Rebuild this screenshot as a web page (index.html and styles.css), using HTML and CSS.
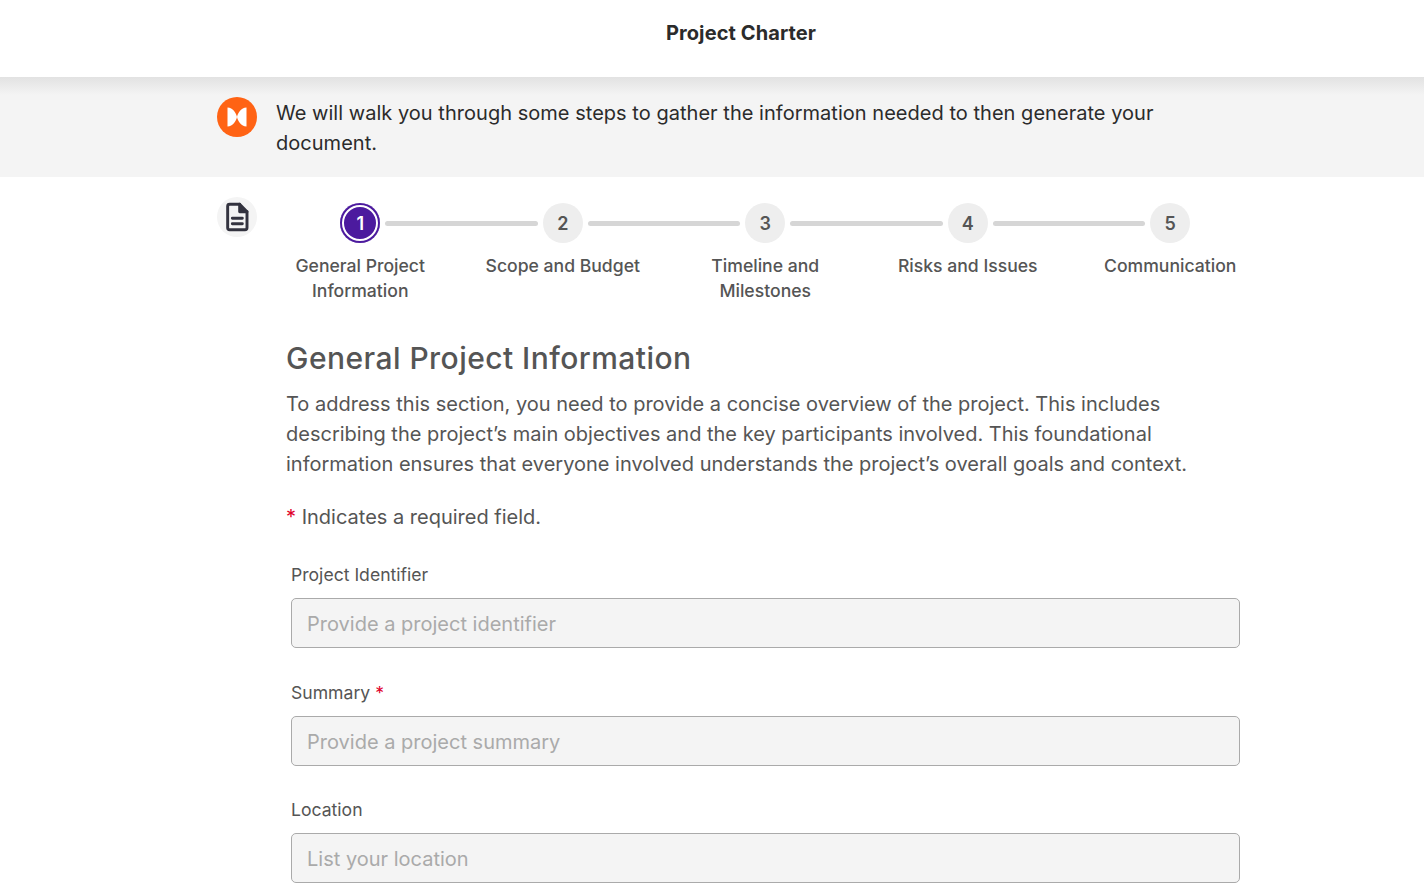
FILE: index.html
```html
<!DOCTYPE html>
<html lang="en">
<head>
<meta charset="utf-8">
<title>Project Charter</title>
<link rel="stylesheet" href="styles.css">
</head>
<body>
<header class="topbar"><h1 class="title">Project Charter</h1></header>
<section class="banner">
  <div class="banner-inner">
    <svg class="logo" viewBox="0 0 40 40" aria-hidden="true"><circle cx="20" cy="20" r="20" fill="#ff6314"/><path d="M10.500 10.500C16 11 19 15.500 20 20C19 24.500 16 29 10.500 29.500ZM29.500 10.500C24 11 21 15.500 20 20C21 24.500 24 29 29.500 29.500Z" fill="#fff"/></svg>
    <p class="banner-text">We will walk you through some steps to gather the information needed to then generate your document.</p>
  </div>
</section>
<main class="page">
  <div class="doc-badge">
    <svg viewBox="0 0 24 24" width="32" height="32" fill="none" stroke="#33333f" stroke-width="2.200" stroke-linejoin="round" stroke-linecap="round" aria-hidden="true"><path d="M6.500 2.500H14L19.500 8V20A1.500 1.500 0 0 1 18 21.500H6.500A1.500 1.500 0 0 1 5 20V4A1.500 1.500 0 0 1 6.500 2.500Z"/><path d="M14 2.500V8H19.500" fill="#33333f"/><path d="M8.500 13H16M8.500 17H16"/></svg>
  </div>
  <div class="content">
    <ol class="steps">
      <li class="step active"><div class="step-head"><span class="line none"></span><span class="num">1</span><span class="line right"></span></div><span class="step-label">General Project Information</span></li>
      <li class="step"><div class="step-head"><span class="line left"></span><span class="num">2</span><span class="line right"></span></div><span class="step-label">Scope and Budget</span></li>
      <li class="step"><div class="step-head"><span class="line left"></span><span class="num">3</span><span class="line right"></span></div><span class="step-label">Timeline and Milestones</span></li>
      <li class="step"><div class="step-head"><span class="line left"></span><span class="num">4</span><span class="line right"></span></div><span class="step-label">Risks and Issues</span></li>
      <li class="step"><div class="step-head"><span class="line left"></span><span class="num">5</span><span class="line none"></span></div><span class="step-label">Communication</span></li>
    </ol>
    <div class="body">
      <h2 class="heading">General Project Information</h2>
      <p class="intro">To address this section, you need to provide a concise overview of the project. This includes describing the project’s main objectives and the key participants involved. This foundational information ensures that everyone involved understands the project’s overall goals and context.</p>
      <p class="required"><span class="star">*</span> Indicates a required field.</p>
      <form class="form">
        <div class="field"><label class="label" for="f1">Project Identifier</label><input class="input" id="f1" placeholder="Provide a project identifier"></div>
        <div class="field"><label class="label" for="f2">Summary <span class="star">*</span></label><input class="input" id="f2" placeholder="Provide a project summary"></div>
        <div class="field"><label class="label" for="f3">Location</label><input class="input" id="f3" placeholder="List your location"></div>
      </form>
    </div>
  </div>
</main>
</body>
</html>
```
FILE: styles.css
```css
* { box-sizing: border-box; }
html, body { height: 892px; overflow: hidden; }
body { margin: 0; background: #fff; color: #555; font-family: Inter, "Liberation Sans", sans-serif; }
.topbar { height: 77px; display: flex; align-items: center; justify-content: center; padding: 0 0 11px 58px; background: #fff; }
.title { margin: 0; font-size: 20px; font-weight: 700; line-height: 24px; letter-spacing: .1px; color: #2b2b2b; }
.banner { height: 100px; background: linear-gradient(#e2e2e2 0, #f4f4f4 18px); }
.banner-inner { width: 980px; margin-left: 217px; padding-top: 20px; display: flex; gap: 19px; }
.logo { width: 40px; height: 40px; flex: none; }
.banner-text { margin: 0; padding-top: 1px; font-size: 20px; line-height: 30px; letter-spacing: .03px; color: #2b2b2b; }
.page { margin-left: 217px; padding-top: 20px; display: flex; gap: 2px; }
.doc-badge { width: 40px; height: 40px; flex: none; border-radius: 50%; background: #f4f4f4; display: flex; align-items: center; justify-content: center; }
.content { width: 1013px; }
.steps { list-style: none; margin: 0; padding: 6px 0 0; display: grid; grid-template-columns: repeat(5, 202.500px); }
.step { display: flex; flex-direction: column; align-items: center; text-align: center; }
.step-head { width: 100%; display: grid; grid-template-columns: 1fr 40px 1fr; align-items: center; }
.line { height: 5px; background: #d6d6d6; }
.line.none { background: transparent; }
.line.left { margin-right: 5px; border-radius: 0 3px 3px 0; }
.line.right { margin-left: 5px; margin-right: -1px; border-radius: 3px 0 0 3px; }
.num { width: 40px; height: 40px; border-radius: 50%; background: #eee; display: flex; align-items: center; justify-content: center; font-size: 18px; font-weight: 600; color: #555; }
.active .num { background: #4c1a9e; color: #fff; box-shadow: inset 0 0 0 2px #4c1a9e, inset 0 0 0 4px #fff; }
.step-label { width: 170px; margin-top: 10px; font-size: 17.600px; font-weight: 500; line-height: 25px; color: #555; }
.body { padding-left: 27px; width: 980px; }
.heading { margin: 33px 0 0; font-size: 30px; font-weight: 450; line-height: 44px; letter-spacing: .45px; color: #555; }
.intro { margin: 9px 0 0; font-size: 20px; line-height: 30px; color: #555; }
.required { margin: 23px 0 0; font-size: 20px; line-height: 30px; color: #555; }
.star { color: #e0002b; font-weight: 400; }
.form { margin-top: 32px; padding-left: 5px; display: flex; flex-direction: column; gap: 33.500px; }
.field { display: flex; flex-direction: column; }
.label { font-size: 17.600px; line-height: 22px; margin-bottom: 12px; color: #555; }
.input { width: 949px; height: 50px; padding: 2px 15px 0; border: 1px solid #aaa; border-radius: 5px; background: #f4f4f4; font: 20px Inter, sans-serif; color: #555; }
.input::placeholder { color: #aaa; opacity: 1; }
```
